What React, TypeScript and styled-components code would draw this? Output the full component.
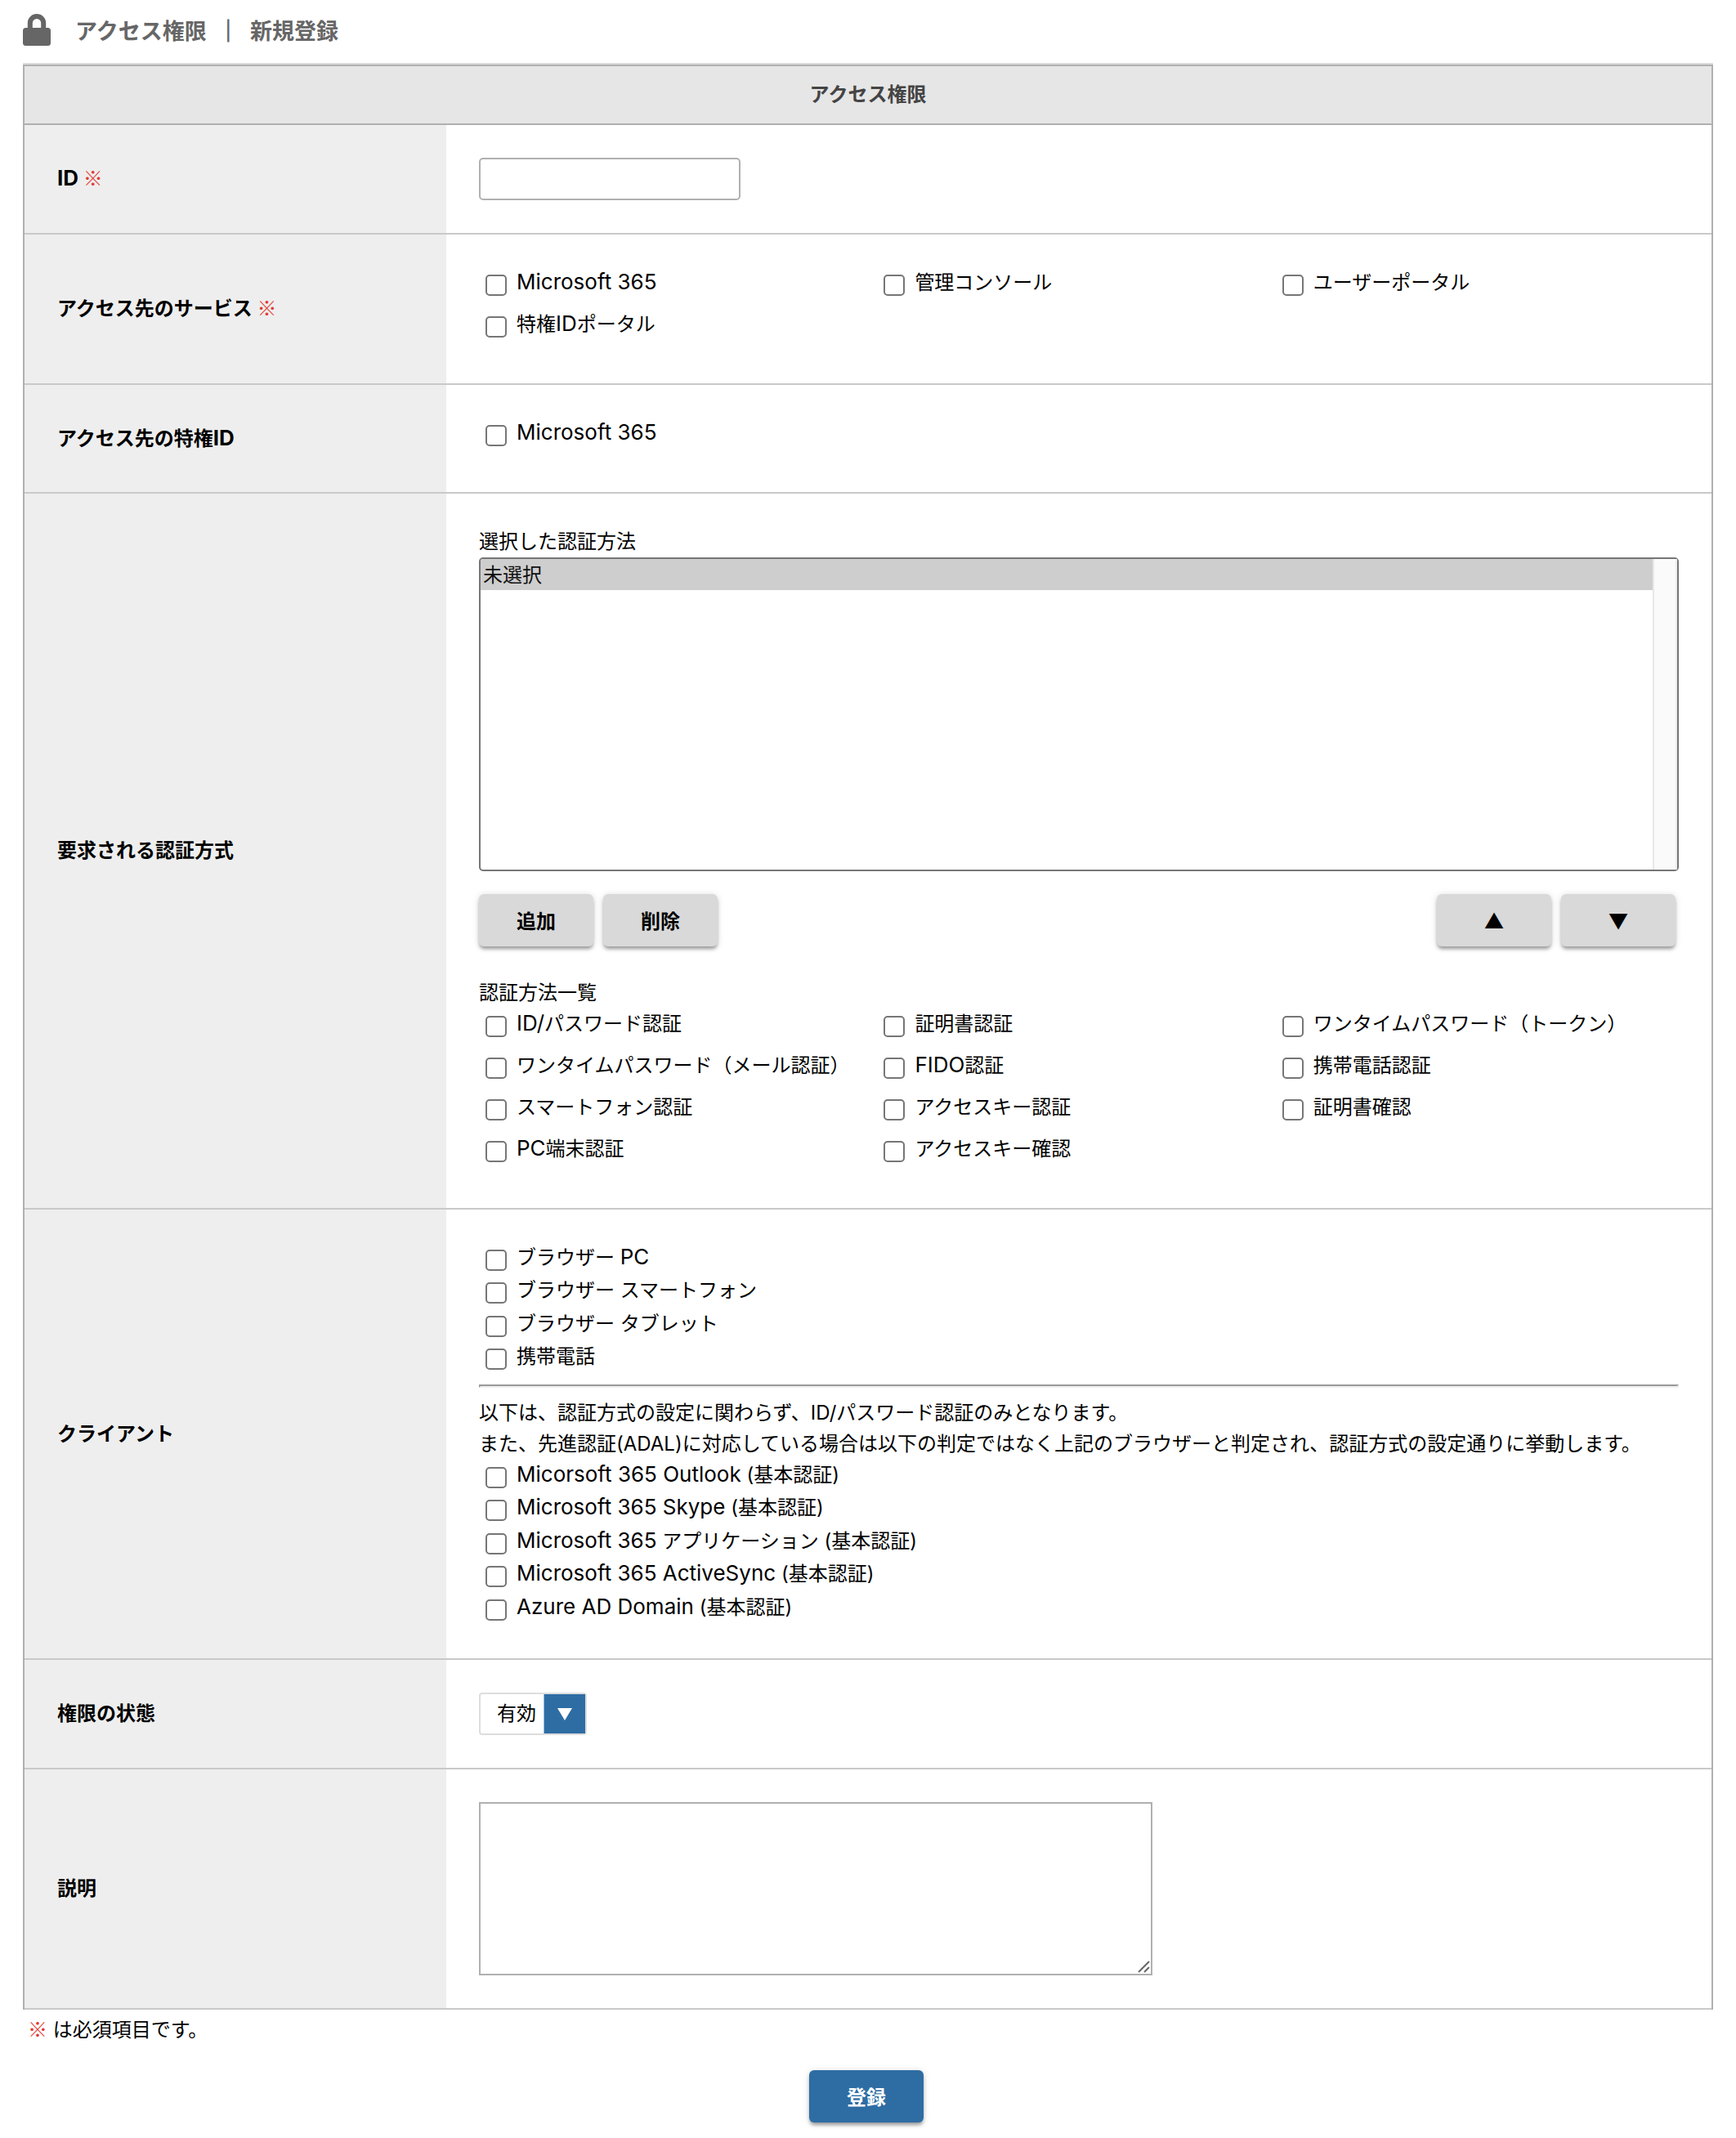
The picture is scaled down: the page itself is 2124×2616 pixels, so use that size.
import React from "react";
import styled, { createGlobalStyle } from "styled-components";

const GlobalStyle = createGlobalStyle`
  *, *::before, *::after { box-sizing: border-box; }
  body {
    margin: 0;
    background: #fff;
    color: #000;
    font-family: Inter, "Noto Sans CJK JP", sans-serif;
    font-size: 24px;
    line-height: 38px;
  }
  input, select, textarea, button { font: inherit; color: inherit; margin: 0; }
`;

const Page = styled.main`
  padding: 0 28px 19px;
`;

const PageHeader = styled.header`
  display: flex;
  align-items: center;
  gap: 30px;
  height: 79px;
  padding-bottom: 6px;
  color: #666;
`;

const PageTitle = styled.h1`
  margin: 0;
  font-family: "Noto Sans CJK JP", sans-serif;
  font-size: 27px;
  font-weight: 700;
`;

const TitleSeparator = styled.span`
  margin: 0 7px;
  -webkit-text-stroke: 1px currentColor;
`;

const FormTable = styled.table`
  width: 100%;
  table-layout: fixed;
  border-collapse: separate;
  border-spacing: 0;
  border-left: 2px solid #b0b0b0;
  border-right: 2px solid #b0b0b0;
  box-shadow: 0 -2px 0 #ddd;
`;

const LabelColumn = styled.col`
  width: 25%;
`;

const TableHeading = styled.th`
  height: 74px;
  padding: 0;
  border-top: 2px solid #b0b0b0;
  border-bottom: 2px solid #b0b0b0;
  background: #e6e6e6;
  color: #444;
  font-weight: 700;
`;

const RowLabel = styled.th`
  padding: 40px;
  border-bottom: 2px solid #c9c9c9;
  background: #eee;
  font-weight: 700;
  text-align: left;
`;

const RowBody = styled.td`
  padding: 40px;
  border-bottom: 2px solid #c9c9c9;
`;

const RequiredMark = styled.span`
  color: #e23b35;
  font-family: "Noto Sans CJK JP", sans-serif;
  font-weight: 400;
  line-height: 1;
`;

const Latin = styled.span`
  font-size: 26px;
  line-height: 1;
`;

const TextInput = styled.input`
  display: block;
  width: 320px;
  height: 52px;
  padding: 0 12px;
  border: 2px solid #b0b0b0;
  border-radius: 5px;
  background: #fff;
`;

const CheckGrid = styled.div`
  display: grid;
  grid-template-columns: repeat(3, 33.2%);
  grid-auto-rows: 51px;
`;

const CheckList = styled.div`
  display: grid;

  & > label { height: 40px; }
  & > label:nth-child(even), & > label:last-child { height: 41px; }
`;

const CheckLabel = styled.label`
  display: flex;
  align-items: flex-start;
  gap: 12px;
  padding-left: 8px;
  white-space: nowrap;
`;

const CheckBox = styled.input`
  appearance: none;
  flex: none;
  width: 26px;
  height: 26px;
  margin-top: 9px;
  border: 2px solid #767676;
  border-radius: 5px;
  background: #fff;

  &:checked { background: #2e6da4; }
`;

const ListBoxFrame = styled.div`
  position: relative;
`;

const ListBox = styled.select`
  display: block;
  width: 100%;
  height: 384px;
  padding: 0;
  border: 2px solid #767676;
  border-radius: 5px;
  background: #fff;

  option {
    height: 38px;
    padding: 0 3px;
    line-height: 38px;
  }
  option:checked {
    background: #cecece linear-gradient(#cecece, #cecece);
    color: #101010;
  }
`;

const ScrollTrack = styled.span`
  position: absolute;
  top: 2px;
  right: 2px;
  bottom: 2px;
  width: 30px;
  border-left: 2px solid #e8e8e8;
  border-right: 2px solid #ededed;
  background: #fafafa;
  pointer-events: none;
`;

const FieldLabel = styled.label`
  display: block;
`;

const GroupTitle = styled.div`
  height: 38px;
`;

const ButtonBar = styled.div`
  display: flex;
  justify-content: space-between;
  padding: 28px 4px 38px 0;
`;

const ButtonGroup = styled.div`
  display: flex;
  gap: 12px;
`;

const Button = styled.button<{ $primary?: boolean }>`
  width: 140px;
  height: 64px;
  padding: 0;
  border: 0;
  border-radius: 6px;
  background: ${(p) => (p.$primary ? "#2e6da4" : "#d9d9d9")};
  color: ${(p) => (p.$primary ? "#fff" : "#000")};
  font-family: "Noto Sans CJK JP", sans-serif;
  font-weight: 700;
  box-shadow: 0 4px 4px -1px rgba(0, 0, 0, 0.35), 0 1px 8px rgba(0, 0, 0, 0.15);
  cursor: pointer;
`;

const Divider = styled.hr`
  margin: 12px 0;
  border: 2px solid;
  border-color: #9a9a9a #eee #eee #9a9a9a;
`;

const Note = styled.p`
  margin: 0;
`;

const SelectBox = styled.span`
  position: relative;
  display: block;
  width: 132px;
  height: 52px;
`;

const StatusSelect = styled.select`
  appearance: none;
  width: 100%;
  height: 100%;
  padding: 0 52px 0 20px;
  border: 2px solid #ddd;
  border-radius: 4px;
  background: #fff;
`;

const SelectArrow = styled.span`
  position: absolute;
  top: 2px;
  right: 2px;
  bottom: 2px;
  width: 51px;
  display: flex;
  align-items: center;
  justify-content: center;
  border-left: 1px solid #8ebdea;
  background: #2e6da4;
  pointer-events: none;
`;

const TextAreaBox = styled.div`
  position: relative;
  width: 824px;
  max-width: 100%;
`;

const TextArea = styled.textarea`
  display: block;
  width: 100%;
  height: 212px;
  padding: 8px 12px;
  border: 2px solid #b0b0b0;
  background: #fff;
  resize: vertical;

  &::-webkit-resizer { background: transparent; }
`;

const ResizeGrip = styled.svg`
  position: absolute;
  right: 3px;
  bottom: 3px;
  pointer-events: none;
`;

const RequiredNote = styled.p`
  margin: 0;
  padding: 6px 6px 0;
`;

const SubmitBar = styled.div`
  display: flex;
  justify-content: center;
  padding: 30px 4px 0 0;
`;

const services = ["Microsoft 365", "管理コンソール", "ユーザーポータル", "特権IDポータル"];
const privilegedIds = ["Microsoft 365"];
const authMethods = [
  "ID/パスワード認証",
  "証明書認証",
  "ワンタイムパスワード（トークン）",
  "ワンタイムパスワード（メール認証）",
  "FIDO認証",
  "携帯電話認証",
  "スマートフォン認証",
  "アクセスキー認証",
  "証明書確認",
  "PC端末認証",
  "アクセスキー確認",
];
const browserClients = ["ブラウザー PC", "ブラウザー スマートフォン", "ブラウザー タブレット", "携帯電話"];
const basicAuthClients = [
  "Micorsoft 365 Outlook (基本認証)",
  "Microsoft 365 Skype (基本認証)",
  "Microsoft 365 アプリケーション (基本認証)",
  "Microsoft 365 ActiveSync (基本認証)",
  "Azure AD Domain (基本認証)",
];

/* Sets Latin words slightly larger so that they stand level with the kanji. */
function MixedText({ text }: { text: string }) {
  const parts = text.split(/([A-Za-z0-9/]+(?: [A-Za-z0-9]+)*)/);
  return <>{parts.map((part, i) => (i % 2 ? <Latin key={i}>{part}</Latin> : part))}</>;
}

function Checks({ name, items }: { name: string; items: string[] }) {
  return (
    <>
      {items.map((item) => (
        <CheckLabel key={item}>
          <CheckBox type="checkbox" name={name} value={item} />
          <span>
            <MixedText text={item} />
          </span>
        </CheckLabel>
      ))}
    </>
  );
}

function LockIcon() {
  return (
    <svg width="34" height="39" viewBox="0 0 34 39" aria-hidden="true">
      <path d="M8.8 19V11.2a8.2 8.2 0 0 1 16.4 0V19" fill="none" stroke="currentColor" strokeWidth="6" />
      <rect x="0" y="17" width="34" height="22" rx="3.5" fill="currentColor" />
    </svg>
  );
}

export default function App() {
  return (
    <Page>
      <GlobalStyle />
      <PageHeader>
        <LockIcon />
        <PageTitle>
          アクセス権限 <TitleSeparator>｜</TitleSeparator> 新規登録
        </PageTitle>
      </PageHeader>
      <form onSubmit={(e) => e.preventDefault()}>
        <FormTable>
          <colgroup>
            <LabelColumn />
            <col />
          </colgroup>
          <thead>
            <tr>
              <TableHeading colSpan={2}>アクセス権限</TableHeading>
            </tr>
          </thead>
          <tbody>
            <tr>
              <RowLabel scope="row">
                <label htmlFor="rule-id">
                  <MixedText text="ID" />
                </label>{" "}
                <RequiredMark>※</RequiredMark>
              </RowLabel>
              <RowBody>
                <TextInput id="rule-id" type="text" />
              </RowBody>
            </tr>
            <tr>
              <RowLabel scope="row">
                アクセス先のサービス <RequiredMark>※</RequiredMark>
              </RowLabel>
              <RowBody>
                <CheckGrid>
                  <Checks name="service" items={services} />
                </CheckGrid>
              </RowBody>
            </tr>
            <tr>
              <RowLabel scope="row">
                <MixedText text="アクセス先の特権ID" />
              </RowLabel>
              <RowBody>
                <CheckGrid>
                  <Checks name="privileged-id" items={privilegedIds} />
                </CheckGrid>
              </RowBody>
            </tr>
            <tr>
              <RowLabel scope="row">要求される認証方式</RowLabel>
              <RowBody>
                <FieldLabel htmlFor="selected-methods">選択した認証方法</FieldLabel>
                <ListBoxFrame>
                  <ListBox id="selected-methods" size={10} defaultValue="none">
                    <option value="none">未選択</option>
                  </ListBox>
                  <ScrollTrack />
                </ListBoxFrame>
                <ButtonBar>
                  <ButtonGroup>
                    <Button type="button">追加</Button>
                    <Button type="button">削除</Button>
                  </ButtonGroup>
                  <ButtonGroup>
                    <Button type="button">▲</Button>
                    <Button type="button">▼</Button>
                  </ButtonGroup>
                </ButtonBar>
                <GroupTitle>認証方法一覧</GroupTitle>
                <CheckGrid>
                  <Checks name="auth-method" items={authMethods} />
                </CheckGrid>
              </RowBody>
            </tr>
            <tr>
              <RowLabel scope="row">クライアント</RowLabel>
              <RowBody>
                <CheckList>
                  <Checks name="browser-client" items={browserClients} />
                </CheckList>
                <Divider />
                <Note>以下は、認証方式の設定に関わらず、ID/パスワード認証のみとなります。</Note>
                <Note>
                  また、先進認証(ADAL)に対応している場合は以下の判定ではなく上記のブラウザーと判定され、認証方式の設定通りに挙動します。
                </Note>
                <CheckList>
                  <Checks name="basic-client" items={basicAuthClients} />
                </CheckList>
              </RowBody>
            </tr>
            <tr>
              <RowLabel scope="row">
                <label htmlFor="rule-status">権限の状態</label>
              </RowLabel>
              <RowBody>
                <SelectBox>
                  <StatusSelect id="rule-status" defaultValue="on">
                    <option value="on">有効</option>
                    <option value="off">無効</option>
                  </StatusSelect>
                  <SelectArrow>
                    <svg width="18" height="15" viewBox="0 0 18 15" aria-hidden="true">
                      <path d="M0 0H18L9 15Z" fill="#fff" />
                    </svg>
                  </SelectArrow>
                </SelectBox>
              </RowBody>
            </tr>
            <tr>
              <RowLabel scope="row">
                <label htmlFor="rule-note">説明</label>
              </RowLabel>
              <RowBody>
                <TextAreaBox>
                  <TextArea id="rule-note" />
                  <ResizeGrip width="15" height="15" viewBox="0 0 15 15" aria-hidden="true">
                    <path d="M1 14L14 1M8 14L14 8" fill="none" stroke="#666" strokeWidth="2" />
                  </ResizeGrip>
                </TextAreaBox>
              </RowBody>
            </tr>
          </tbody>
        </FormTable>
        <RequiredNote>
          <RequiredMark>※</RequiredMark> は必須項目です。
        </RequiredNote>
        <SubmitBar>
          <Button type="submit" $primary>
            登録
          </Button>
        </SubmitBar>
      </form>
    </Page>
  );
}
